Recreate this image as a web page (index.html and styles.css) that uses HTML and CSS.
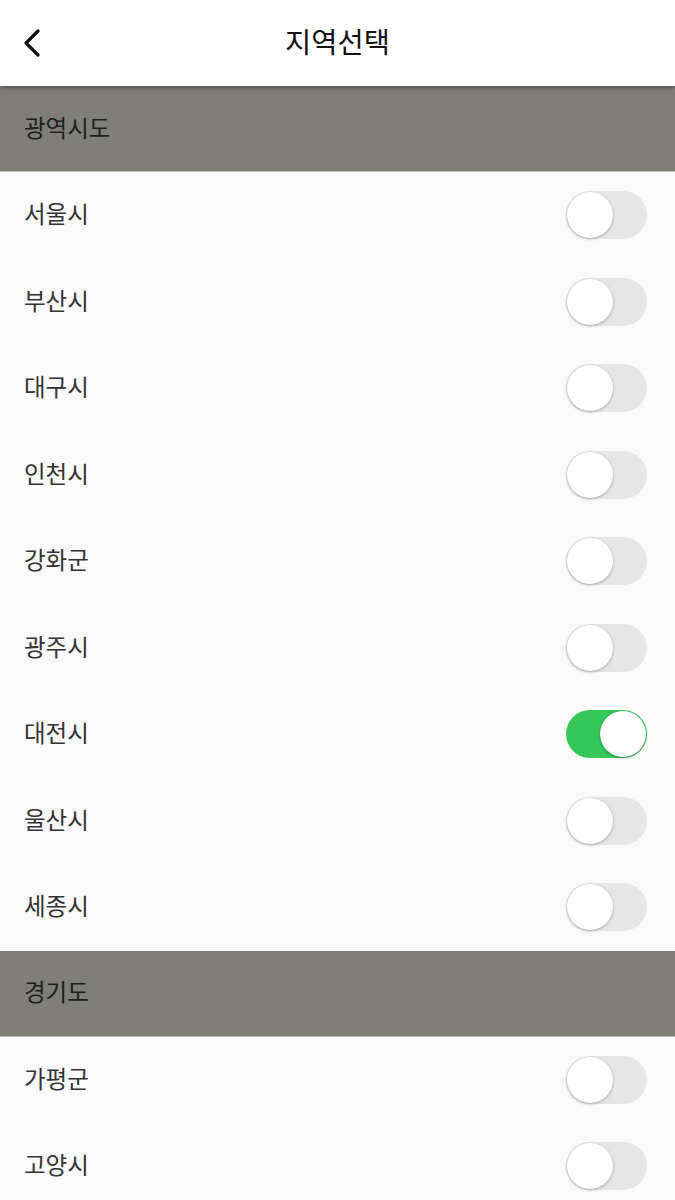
FILE: index.html
```html
<!DOCTYPE html>
<html lang="ko">
<head>
<meta charset="utf-8">
<title>지역선택</title>
<link rel="stylesheet" href="styles.css">
</head>
<body>
<header class="topbar">
  <button class="back" aria-label="뒤로">
    <svg width="20" height="28" viewBox="0 0 20 28"><path d="M16 2 L4 14 L16 26" fill="none" stroke="#111" stroke-width="3.2" stroke-linecap="round" stroke-linejoin="round"/></svg>
  </button>
  <h1 class="title">지역선택</h1>
</header>
<main class="list">
  <div class="section"><span class="stext">광역시도</span></div>
  <div class="row"><span class="label">서울시</span><span class="toggle"></span></div>
  <div class="row"><span class="label">부산시</span><span class="toggle"></span></div>
  <div class="row"><span class="label">대구시</span><span class="toggle"></span></div>
  <div class="row"><span class="label">인천시</span><span class="toggle"></span></div>
  <div class="row"><span class="label">강화군</span><span class="toggle"></span></div>
  <div class="row"><span class="label">광주시</span><span class="toggle"></span></div>
  <div class="row"><span class="label">대전시</span><span class="toggle on"></span></div>
  <div class="row"><span class="label">울산시</span><span class="toggle"></span></div>
  <div class="row"><span class="label">세종시</span><span class="toggle"></span></div>
  <div class="section"><span class="stext">경기도</span></div>
  <div class="row"><span class="label">가평군</span><span class="toggle"></span></div>
  <div class="row"><span class="label">고양시</span><span class="toggle"></span></div>
</main>
</body>
</html>
```
FILE: styles.css
```css
html, body {
  margin: 0;
  padding: 0;
  background: #fafafa;
  font-family: "Noto Sans CJK KR", "Noto Sans", sans-serif;
  overflow: hidden;
}
.topbar {
  position: relative;
  height: 86px;
  background: #ffffff;
  display: flex;
  align-items: center;
  justify-content: center;
  box-shadow: 0 2px 4px rgba(0,0,0,0.35);
  z-index: 2;
}
.back {
  position: absolute;
  left: 22px;
  top: 29px;
  padding: 0;
  border: 0;
  background: none;
  display: flex;
}
.title {
  margin: -4px 0 0 0;
  font-size: 28.5px;
  font-weight: 400;
  color: #111;
  line-height: 1;
}
.list {
  display: flex;
  flex-direction: column;
}
.section {
  height: 86px;
  background: #7f7e79;
  display: flex;
  align-items: center;
  padding-left: 24px;
  border-bottom: 1px solid #bdbcb8;
  box-sizing: border-box;
}
.stext {
  font-size: 23.5px;
  color: #1e1e1e;
  margin-top: -4px;
}
.row {
  height: 86.5px;
  display: flex;
  align-items: center;
  justify-content: space-between;
  padding: 0 28px 0 24px;
  background: #fafafa;
}
.label {
  font-size: 23.5px;
  color: #333;
  margin-top: -4px;
}
.toggle {
  position: relative;
  width: 81px;
  height: 48px;
  border-radius: 24px;
  background: #e6e6e6;
  box-sizing: border-box;
}
.toggle::after {
  content: "";
  position: absolute;
  left: 1px;
  top: 1px;
  width: 46px;
  height: 46px;
  border-radius: 50%;
  background: #fff;
  box-shadow: 0 1px 3px rgba(0,0,0,0.3);
}
.toggle.on {
  background: #35c759;
}
.toggle.on::after {
  left: 34px;
}
```
